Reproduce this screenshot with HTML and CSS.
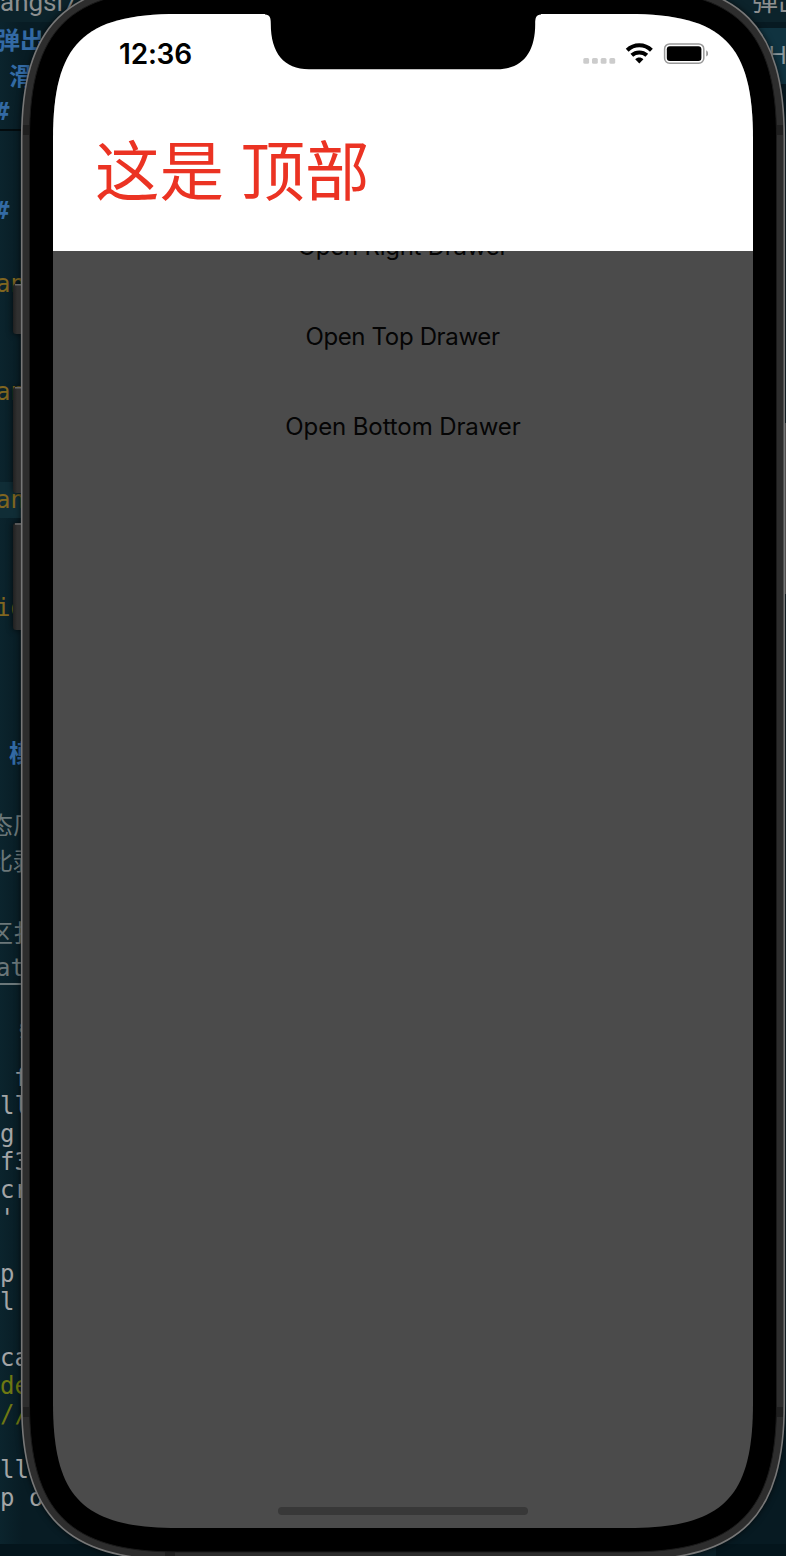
FILE: index.html
```html
<!DOCTYPE html>
<html lang="zh-CN">
<head>
<meta charset="utf-8">
<title>Drawer</title>
<link rel="stylesheet" href="styles.css">
</head>
<body>
<div class="desktop">
  <div class="windows">
    <div class="pane pane-left">
      <div class="tab">angsi7</div>
      <div class="doc-head">
        <div class="line heading">弹出</div>
        <div class="line heading indent">滑</div>
        <div class="line heading hash">#</div>
      </div>
      <div class="doc">
        <div class="line heading hash">#</div>
        <div class="line"></div>
        <div class="line code">an</div>
        <div class="line"></div>
        <div class="line"></div>
        <div class="line code">an</div>
        <div class="line"></div>
        <div class="line"></div>
        <div class="line code active">an</div>
        <div class="line"></div>
        <div class="line"></div>
        <div class="line code">id</div>
        <div class="line"></div>
        <div class="line"></div>
        <div class="line"></div>
        <div class="line heading indent">模</div>
        <div class="line"></div>
        <div class="line body">态厂</div>
        <div class="line body">比剥</div>
        <div class="line"></div>
        <div class="line body">区扌</div>
        <div class="line code status">at</div>
      </div>
      <div class="terminal">
        <div class="marker">§</div>
        <div class="row far">f</div>
        <div class="row">ll</div>
        <div class="row">g</div>
        <div class="row">f3</div>
        <div class="row">cr</div>
        <div class="row">'</div>
        <div class="row"></div>
        <div class="row">p</div>
        <div class="row">l</div>
        <div class="row"></div>
        <div class="row">ca</div>
        <div class="row green">de</div>
        <div class="row green">//</div>
        <div class="row"></div>
        <div class="row">ll</div>
        <div class="row">p o</div>
      </div>
      <div class="dock"></div>
    </div>
    <div class="pane pane-right">
      <div class="tab tab-right">弹出</div>
      <div class="toolbar">H</div>
      <div class="spacer"></div>
      <div class="dock"></div>
    </div>
  </div>

  <div class="phone">
    <svg class="frame" width="786" height="1556" viewBox="0 0 786 1556">
      <defs>
        <linearGradient id="key" x1="0" x2="1"><stop offset="0" stop-color="#202020"/><stop offset=".3" stop-color="#303030"/></linearGradient>
      </defs>
      <g fill="url(#key)">
        <rect x="13" y="284" width="14" height="50" rx="3"/>
        <rect x="13" y="387" width="14" height="106" rx="3"/>
        <rect x="13" y="523" width="14" height="107" rx="3"/>
      </g>
      <path d="M15 284.7h7M15 387.7h7M15 524h7" stroke="#666" stroke-width="1.5"/>
      <rect x="782" y="423" width="4" height="171" fill="#4a4a4a"/>
      <path class="shell" d="M21.7 139C21.7 26 65.7-18 178.700-18H628.300C741.300-18 784.300 26 784.300 139V1403C784.300 1516 741.300 1560 628.300 1560H178.700C65.700 1560 21.700 1516 21.700 1403Z"/>
      <path d="M23 125h7v10h-7zM776 125h7v10h-7zM23 1407h7v10h-7zM776 1407h7v10h-7zM165 1552h10v6h-10z" fill="#1f1f1f"/>
      <path class="bezel" d="M29.500 138C29.500 30 69.500-10 177.500-10H628.500C736.500-10 776.500 30 776.500 138V1404C776.500 1512 736.500 1552 628.500 1552H177.500C69.500 1552 29.500 1512 29.500 1404Z"/>
    </svg>

    <div class="screen">
      <div class="drawer">
        <div class="statusbar">
          <span class="time">12:36</span>
          <svg class="status-icons" width="128" height="26" viewBox="0 0 128 26">
            <g fill="#ccc">
              <rect x="3.300" y="18" width="5.800" height="5.800" rx="1.500"/><rect x="12" y="18" width="5.800" height="5.800" rx="1.500"/><rect x="20.700" y="18" width="5.800" height="5.800" rx="1.500"/><rect x="29.400" y="18" width="5.800" height="5.800" rx="1.500"/>
            </g>
            <g fill="none" stroke="#000" stroke-width="4.100">
              <path d="M47.200 10.200C54 3.600 64.600 3.600 71.400 10.200"/>
              <path d="M51.800 15.300C56.100 11.500 62.500 11.500 66.800 15.300"/>
            </g>
            <path d="M55.200 19.200C57.400 16.900 61.200 16.900 63.400 19.200L59.300 23.600Z"/>
            <rect x="84.600" y="3.900" width="39.200" height="19.300" rx="5" fill="none" stroke="#999" stroke-width="1.500"/>
            <rect x="86.800" y="6.200" width="34.600" height="14.800" rx="3"/>
            <path d="M126.200 10.200C128.800 11.500 128.800 15.300 126.200 16.600Z" fill="#999"/>
          </svg>
        </div>
        <div class="title">这是 顶部</div>
      </div>
      <div class="content">
        <div class="button clipped">Open Right Drawer</div>
        <div class="button top">Open Top Drawer</div>
        <div class="button bottom">Open Bottom Drawer</div>
      </div>
      <div class="home"></div>
    </div>

    <svg class="notch" width="276" height="56" viewBox="0 0 276 56">
      <path d="M0 0H276V.500C271 .500 270.200 4 270.200 10C270.200 39 257 55.200 232 55.200H44C19 55.200 5.800 39 5.800 10C5.800 4 5 .500 0 .500Z"/>
    </svg>
  </div>
</div>
</body>
</html>
```
FILE: styles.css
```css
* { box-sizing: border-box; }
body { margin: 0; background: #0a2028; }
.desktop { position: relative; width: 786px; height: 1556px; overflow: hidden; }
.windows { display: flex; justify-content: space-between; height: 1556px; }
.pane { display: flex; flex-direction: column; overflow: hidden; white-space: nowrap; }
.pane-left { width: 250px; background: linear-gradient(90deg, #0b242d, #081c24 22px); }
.pane-right { width: 70px; background: #071a22; }
.pane > * { flex: none; }
.tab { height: 22px; font: 26px/5px Roboto, "Noto Sans CJK SC", sans-serif; color: #8d8f90; background: #0c232b; }
.tab-right { padding-left: 36px; line-height: 5px; }
.toolbar { height: 56px; margin-top: 6px; padding-left: 52px; font: 26px/52px "Open Sans", sans-serif; color: #8d9a9e; background: #103340; }
.doc-head { height: 109px; border-bottom: 2px solid #030b0e; }
.doc-head .heading { line-height: 33px; }
.doc-head .hash { line-height: 36px; }
.doc { height: 859px; padding-top: 63px; }
.line { height: 36px; font: 24px/35px "Noto Sans CJK SC", sans-serif; }
.heading { color: #336aa4; font-weight: 700; margin-left: -4px; }
.indent { padding-left: 13px; }
.hash { font-family: "DejaVu Sans Mono", monospace; margin-left: -5px; }
.code { font-family: "DejaVu Sans Mono", monospace; line-height: 36px; color: #806620; text-indent: -4px; }
.active { background: #102d36; }
.body { color: #6b7779; text-indent: -11px; }
.status { color: #6b7779; border-bottom: 2px solid #6b7779; height: 35px; }
.terminal { height: 554px; padding-top: 26px; font: 24px/28px "DejaVu Sans Mono", monospace; color: #a3a5a6; }
.marker { height: 48px; padding-left: 18px; font-size: 18px; color: #6b7779; }
.row { height: 28px; }
.far { padding-left: 14px; }
.green { color: #6e7812; }
.dock { height: 12px; background: #04151c; }
.pane > .spacer { flex: 1; }
.phone { position: absolute; inset: 0; }
.frame { position: absolute; inset: 0; filter: drop-shadow(0 0 3px #000a); }
.shell { fill: #2d2d2d; stroke: #777; stroke-width: 1.600; }
.bezel { fill: #000; stroke: #1a1a1a; stroke-width: 1; }
.screen {
  position: relative; width: 700px; height: 1514px; margin: 14px 0 0 53px; background: #4b4b4b;
  clip-path: path("M0 125C0 30 30 0 125 0H575C670 0 700 30 700 125V1389C700 1484 670 1514 575 1514H125C30 1514 0 1484 0 1389Z");
}
.drawer { height: 237px; background: #fff; }
.statusbar { display: flex; justify-content: space-between; height: 80px; padding: 26px 45px 0 66px; }
.time { font: 600 28px/28px Inter, sans-serif; color: #000; letter-spacing: -.2px; }
.title { padding-left: 42px; font: 64.500px/90px "Noto Sans CJK SC", sans-serif; margin-top: 28px; color: #eb3323; word-spacing: 2px; }
.status-icons { display: block; }
.content { display: flow-root; height: 240px; overflow: hidden; text-align: center; color: #050505; }
.button { height: 90px; font: 24px/90px Inter, sans-serif; letter-spacing: -.1px; }
.clipped { margin-top: -49px; letter-spacing: -.25px; }
.top { letter-spacing: -.35px; padding-right: 1px; }
.home { width: 250px; height: 8px; margin: 1016px auto 0; border-radius: 4px; background: #383838; }
.notch { position: absolute; left: 265px; top: 13.500px; }
```
